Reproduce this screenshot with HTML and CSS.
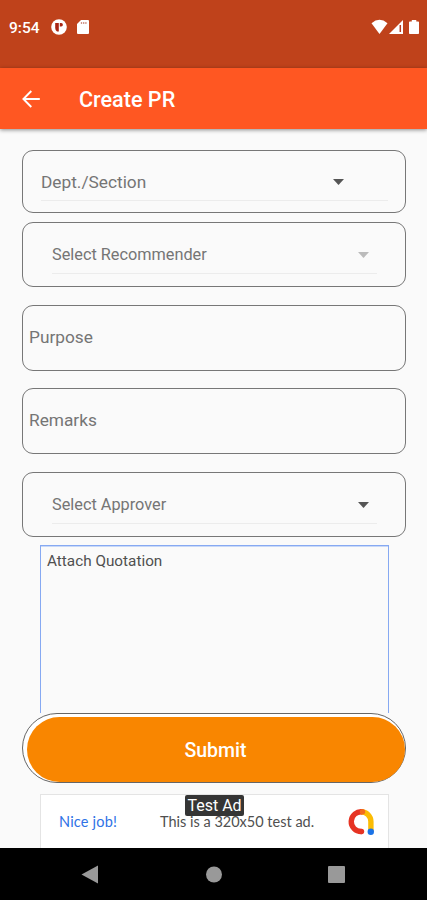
FILE: index.html
```html
<!DOCTYPE html>
<html lang="en">
<head>
<meta charset="utf-8">
<title>Create PR</title>
<link rel="stylesheet" href="styles.css">
</head>
<body>
<div class="screen">
  <div class="status">
    <span class="time">9:54</span>
    <svg class="app-icon" width="16" height="16" viewBox="0 0 16 16"><circle cx="8" cy="8" r="7.8" fill="#fff"/><path d="M4.200 4h3.600v8.500H6Q4.200 11.500 4.200 9zM8.800 4h1.400a1.700 1.700 0 0 1 0 3.400H8.800z" fill="#a92513"/></svg>
    <svg class="sd-icon" width="12" height="14" viewBox="0 0 12 14"><path d="M4 0h7q1 0 1 1v12q0 1-1 1H1q-1 0-1-1V4z" fill="#fff"/><path d="M4.500 2v2M6.700 2v2M8.900 2v2" stroke="#cf9488" stroke-width="1.300"/></svg>
    <span class="spacer"></span>
    <svg width="50" height="16" viewBox="0 0 50 16"><path d="M0.500 4.300Q8.500-2.600 16.500 4.300L8.500 15z" fill="#fff"/><path d="M18 15L32 1v14z" fill="#fff"/><path d="M29.300 6v7" stroke="#b63a20" stroke-width="1.500"/><path d="M38.800 2.500h2V1h4.500v1.500h1.900q.8 0 .8.800v11q0 .7-.8.700h-8.400q-.8 0-.8-.7v-11q0-.8.800-.8z" fill="#fff"/></svg>
  </div>
  <header class="appbar">
    <svg width="18" height="18" viewBox="0 0 18 18" fill="none" stroke="#fff" stroke-width="1.900"><path d="M17.800 9H1.700M9.300 1L1.400 9l7.900 8"/></svg>
    <h1>Create PR</h1>
  </header>
  <main class="form">
    <div class="field dept"><div class="select"><span>Dept./Section</span><i class="caret"></i></div></div>
    <div class="field rec inset"><div class="select"><span>Select Recommender</span><i class="caret off"></i></div></div>
    <div class="field purpose"><span>Purpose</span></div>
    <div class="field remarks"><span>Remarks</span></div>
    <div class="field approver inset"><div class="select"><span>Select Approver</span><i class="caret"></i></div></div>
    <div class="attach"><span>Attach Quotation</span></div>
    <div class="submit-ring"><button class="submit"><span>Submit</span></button></div>
    <div class="ad">
      <span class="nice">Nice job!</span>
      <span class="ad-text">This is a 320x50 test ad.</span>
      <svg class="admob" width="28" height="28" viewBox="0 0 28 28" fill="none" stroke-width="5.400"><path d="M14 3.700A9.900 9.900 0 0 1 23.900 13.600V24" stroke="#fbbc04"/><path d="M15.500 3.800A9.900 9.900 0 1 0 14.500 23.500" stroke="#e63323"/><circle cx="14.500" cy="23.500" r="2.700" fill="#e63323"/><circle cx="15.500" cy="3.800" r="2.700" fill="#f36b1c"/><circle cx="23.800" cy="23.800" r="3.200" fill="#1a73e8"/></svg>
      <span class="badge">Test Ad</span>
    </div>
  </main>
  <nav class="navbar">
    <svg width="427" height="52" viewBox="0 0 427 52" fill="#999"><path d="M98 17.500v18L81.500 26.500z"/><circle cx="214" cy="26.500" r="8"/><rect x="328" y="18" width="17" height="17" rx="1"/></svg>
  </nav>
</div>
</body>
</html>
```
FILE: styles.css
```css
* { box-sizing: border-box; }
body { margin: 0; font-family: Roboto, sans-serif; background: #fafafa; }
.screen { width: 427px; height: 900px; overflow: hidden; display: flex; flex-direction: column; background: #fafafa; }
.status { height: 68px; flex: none; background: #bf421b; display: flex; align-items: flex-start; padding: 19px 6px 0 9px; color: #fff; }
.time { font-size: 15.500px; line-height: 19px; font-weight: 500; width: 42px; white-space: nowrap; }
.app-icon { margin-right: 10px; }
.sd-icon { margin-top: 1px; }
.spacer { flex: 1; }
.appbar { position: relative; height: 61px; flex: none; background: #ff5722; display: flex; align-items: center; padding: 1px 0 0 22px; gap: 39px; color: #fff; box-shadow: 0 1px 4px rgba(0,0,0,.45); }
h1 { margin: 0; font-size: 21.600px; line-height: 28px; font-weight: 500; padding-top: 2px; }
.form { flex: none; height: 719px; padding: 21px 21px 0 22px; display: flex; flex-direction: column; overflow: hidden; }
.field { flex: none; border: 1px solid #777; border-radius: 11px; color: #757575; font-size: 17.300px; line-height: 20px; white-space: nowrap; }
.dept { height: 63px; padding: 17px 17px 0 18px; margin-bottom: 9px; }
.inset { height: 65px; padding: 17px 28px 0 29px; font-size: 16.300px; }
.rec { margin-bottom: 18px; }
.select { height: 33px; padding-top: 4px; border-bottom: 1px solid #ececec; display: flex; justify-content: space-between; }
.inset .select { padding-top: 5px; height: 34px; }
.caret { width: 11px; height: 6px; margin: 7px 8px 0 0; background: #555; clip-path: polygon(0 0, 100% 0, 50% 100%); }
.dept .caret { margin-right: 44px; }
.off { background: #bbb; }
.purpose, .remarks { height: 66px; padding: 21px 6px; }
.purpose { margin-bottom: 17px; }
.remarks { margin-bottom: 18px; }
.approver { margin-bottom: 8px; }
.attach { height: 168px; flex: none; margin: 0 17px 0 18px; border: 1px solid #86a9f2; border-bottom: 0; padding: 6px; color: #505050; font-size: 15.300px; line-height: 19px; box-shadow: inset 0 1px 0 #c8d8f8; }
.submit-ring { height: 70px; flex: none; border: 1px solid #666; border-radius: 35px; padding: 3px 0 0 4px; background: #fff; margin-bottom: 11px; }
.submit { display: block; width: 100%; height: 65px; border: 0; border-radius: 33px; background: #f98600; color: #fff; font: 500 19.500px/22px Roboto, sans-serif; padding: 3px 1px 0 0; }
.ad { position: relative; height: 60px; flex: none; margin: 0 17px 0 18px; border: 1px solid #e4e4e4; background: #fff; display: flex; align-items: flex-start; padding: 13px 13px 0 18px; font: 14px/28px Lato, sans-serif; white-space: nowrap; }
.nice { color: #2f72e6; width: 101px; font-size: 14.500px; letter-spacing: .2px; }
.ad-text { color: #505050; flex: 1; font-size: 14.500px; }
.badge { position: absolute; left: 144px; top: 0; width: 59px; height: 21px; border-radius: 2px; background: rgba(40,40,40,.94); color: #fff; font: 16px/22px Roboto, sans-serif; text-align: center; }
.navbar { height: 52px; flex: none; background: #000; }
.navbar svg { display: block; }
```
